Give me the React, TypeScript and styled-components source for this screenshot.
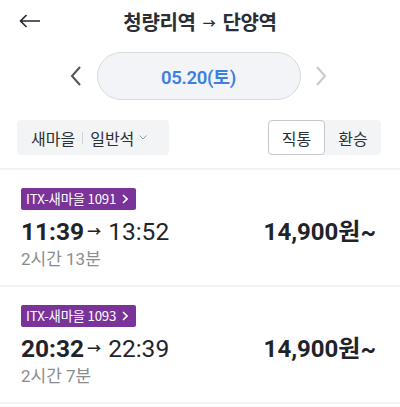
import React from 'react'
import styled, { createGlobalStyle } from 'styled-components'

const GlobalStyle = createGlobalStyle`
  html, body {
    margin: 0;
    padding: 0;
    background: #fff;
  }
  body {
    font-family: Roboto, "Noto Sans CJK KR", sans-serif;
    color: #23272e;
    -webkit-font-smoothing: antialiased;
  }
  * { box-sizing: border-box; }
`

const Page = styled.div`
  width: 400px;
  height: 407px;
  overflow: hidden;
  background: #fff;
`

const Header = styled.header`
  display: grid;
  grid-template-columns: 60px 1fr 60px;
  align-items: center;
  height: 44px;
`

const BackButton = styled.button`
  display: flex;
  align-items: center;
  justify-content: flex-start;
  padding: 0 0 0 19px;
  height: 44px;
  border: none;
  background: none;
  color: #23272e;
  margin-top: -6px;
`

const Title = styled.h1`
  margin: 0;
  text-align: center;
  font-family: "Noto Sans CJK KR", sans-serif;
  font-size: 20px;
  font-weight: 700;
  line-height: 44px;
  color: #2a2e35;
  letter-spacing: -0.3px;
`

const TitleArrow = styled.span`
  font-size: 13px;
  margin: 0 7px;
  position: relative;
  top: -2px;
`

const DateRow = styled.div`
  display: flex;
  align-items: center;
  justify-content: center;
  gap: 15px;
  margin-top: 8px;
  height: 48px;
  padding-right: 3px;
`

const Chevron = styled.button<{ $dim?: boolean }>`
  display: flex;
  align-items: center;
  justify-content: center;
  width: 12px;
  height: 24px;
  padding: 0;
  border: none;
  background: none;
  color: ${(p) => (p.$dim ? '#c9c9c9' : '#505358')};
`

const DatePill = styled.div`
  display: flex;
  align-items: center;
  justify-content: center;
  width: 204px;
  height: 48px;
  border-radius: 24px;
  background: #f2f4f7;
  border: 1px solid #d6d9de;
  color: #3b7fe3;
  font-size: 18.5px;
  font-weight: 600;
  letter-spacing: -0.3px;
`

const FilterRow = styled.div`
  display: flex;
  align-items: center;
  justify-content: space-between;
  margin-top: 20px;
  padding: 0 19px 0 17px;
  height: 35px;
`

const SeatFilter = styled.button`
  display: flex;
  align-items: center;
  height: 35px;
  padding: 0 22px 0 14px;
  border: none;
  border-radius: 4px;
  background: #f3f4f6;
  font-family: "Noto Sans CJK KR", sans-serif;
  font-size: 16px;
  color: #2a2e35;
`

const Bar = styled.span`
  width: 1px;
  height: 12px;
  background: #cfd2d6;
  margin: 0 7px;
`

const Caret = styled.span`
  display: flex;
  margin-left: 5px;
  color: #9a9da2;
`

const Segments = styled.div`
  display: flex;
  height: 35px;
  border-radius: 4px;
  background: #f3f4f6;
`

const Segment = styled.button<{ $active?: boolean }>`
  width: ${(p) => (p.$active ? '57px' : '56px')};
  height: 35px;
  padding: 0;
  border: 1px solid ${(p) => (p.$active ? '#c4c7cc' : 'transparent')};
  border-radius: 4px;
  background: ${(p) => (p.$active ? '#fff' : 'transparent')};
  font-family: "Noto Sans CJK KR", sans-serif;
  font-size: 16px;
  color: #2a2e35;
`

const Divider = styled.div`
  margin-top: 13px;
  height: 2px;
  background: #f1f2f3;
`

const Card = styled.div`
  height: 117px;
  padding: 18px 24px 0 21px;
  border-bottom: 2px solid #f1f2f3;
`

const Badge = styled.span`
  display: inline-flex;
  align-items: center;
  gap: 6px;
  height: 22px;
  padding: 0 8px 0 5px;
  border-radius: 2px;
  background: #7a3399;
  color: #fff;
  font-family: "Noto Sans CJK KR", sans-serif;
  font-size: 13.3px;
  line-height: 22px;
  letter-spacing: -0.2px;
`

const TimeRow = styled.div`
  display: flex;
  align-items: baseline;
  justify-content: space-between;
  margin-top: 7px;
  line-height: 30px;
  height: 30px;
`

const Times = styled.div`
  display: flex;
  align-items: baseline;
  font-size: 24.5px;
  color: #1f242b;
`

const Depart = styled.span`
  font-weight: 700;
`

const Arrow = styled.span`
  font-size: 14px;
  font-weight: 700;
  margin: 0 7px 0 3px;
  position: relative;
  top: -4px;
`

const Price = styled.div`
  font-size: 24px;
  font-weight: 700;
  color: #1f242b;
`

const Duration = styled.div`
  margin-top: 1px;
  font-size: 17px;
  line-height: 22px;
  color: #8a8c90;
`

const trains = [
  { name: 'ITX-새마을 1091', dep: '11:39', arr: '13:52', dur: '2시간 13분', price: '14,900원~' },
  { name: 'ITX-새마을 1093', dep: '20:32', arr: '22:39', dur: '2시간 7분', price: '14,900원~' },
]

function TrainCard ({ train }) {
  return (
    <Card>
      <Badge>
        {train.name}
        <svg width='6' height='10' viewBox='0 0 6 10'>
          <path d='M1 1l4 4-4 4' fill='none' stroke='#fff' strokeWidth='1.6' />
        </svg>
      </Badge>
      <TimeRow>
        <Times>
          <Depart>{train.dep}</Depart>
          <Arrow>→</Arrow>
          <span>{train.arr}</span>
        </Times>
        <Price>{train.price}</Price>
      </TimeRow>
      <Duration>{train.dur}</Duration>
    </Card>
  )
}

export default function App () {
  return (
    <Page>
      <GlobalStyle />
      <Header>
        <BackButton aria-label='back'>
          <svg width='22' height='14' viewBox='0 0 22 14'>
            <path d='M21 7H2M7.5 1L1.5 7l6 6' fill='none' stroke='currentColor' strokeWidth='1.6' />
          </svg>
        </BackButton>
        <Title>
          청량리역<TitleArrow>→</TitleArrow>단양역
        </Title>
        <span />
      </Header>
      <DateRow>
        <Chevron aria-label='prev'>
          <svg width='11' height='20' viewBox='0 0 11 20'>
            <path d='M10 1L2 10l8 9' fill='none' stroke='currentColor' strokeWidth='2' />
          </svg>
        </Chevron>
        <DatePill>05.20(토)</DatePill>
        <Chevron $dim aria-label='next'>
          <svg width='11' height='20' viewBox='0 0 11 20'>
            <path d='M1 1l8 9-8 9' fill='none' stroke='currentColor' strokeWidth='2' />
          </svg>
        </Chevron>
      </DateRow>
      <FilterRow>
        <SeatFilter>
          새마을<Bar />일반석
          <Caret>
            <svg width='8' height='5' viewBox='0 0 8 5'>
              <path d='M0.5 0.5l3.5 3.5 3.5-3.5' fill='none' stroke='currentColor' strokeWidth='1' />
            </svg>
          </Caret>
        </SeatFilter>
        <Segments>
          <Segment $active>직통</Segment>
          <Segment>환승</Segment>
        </Segments>
      </FilterRow>
      <Divider />
      {trains.map((t) => (
        <TrainCard key={t.name} train={t} />
      ))}
    </Page>
  )
}
